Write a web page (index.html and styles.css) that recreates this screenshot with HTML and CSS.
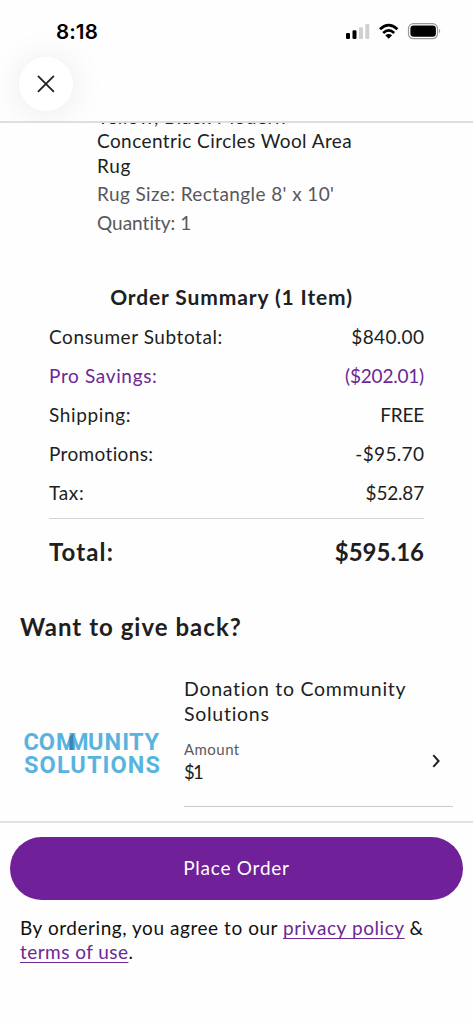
FILE: index.html
```html
<!DOCTYPE html>
<html lang="en">
<head>
<meta charset="utf-8">
<meta name="viewport" content="width=device-width, initial-scale=1">
<title>Review order</title>
<link rel="stylesheet" href="styles.css">
</head>
<body>
<div class="screen">
  <header class="header">
    <div class="status">
      <span class="time">8:18</span>
      <svg class="status-icons" width="96" height="20" viewBox="0 0 96 20">
        <rect x="1" y="11" width="4" height="6" rx="1.3"/>
        <rect x="7.5" y="8.3" width="4" height="8.7" rx="1.3"/>
        <rect class="off" x="14" y="5.2" width="4" height="11.8" rx="1.3"/>
        <rect class="off" x="20.3" y="2" width="4" height="15" rx="1.3"/>
        <path class="wave" d="M35 7.2Q43.7-.8 52.4 7.2M38.2 10.9Q43.7 5.8 49.2 10.9"/>
        <path d="M43.7 16.8L40.3 13.2Q43.7 10.7 47.1 13.2Z"/>
        <rect class="shell" x="63.5" y="1.7" width="29" height="15" rx="4.8"/>
        <rect x="65.4" y="3.6" width="25.5" height="11.2" rx="3.3"/>
        <path class="cap" d="M94 7Q96.2 9.2 94 11.4Z"/>
      </svg>
    </div>
    <button class="close" aria-label="Close">
      <svg width="18" height="18" viewBox="0 0 18 18"><path d="M1.4 1.4L16.4 16.4M16.4 1.4L1.4 16.4"/></svg>
    </button>
  </header>
  <main class="content">
    <section class="product">
      <div class="name"><span class="n1">Yellow, Black Modern</span><br><span class="n2">Concentric Circles Wool Area</span><br><span class="n3">Rug</span></div>
      <div class="option"><span class="o1">Rug Size: Rectangle 8' x 10'</span></div>
      <div class="option"><span class="o2">Quantity: 1</span></div>
    </section>
    <section class="summary">
      <h2 class="summary-title">Order Summary (1 Item)</h2>
      <div class="row"><span class="r1">Consumer Subtotal:</span><span class="a1">$840.00</span></div>
      <div class="row pro"><span class="r2">Pro Savings:</span><span class="a2">($202.01)</span></div>
      <div class="row"><span class="r3">Shipping:</span><span class="a3">FREE</span></div>
      <div class="row"><span class="r4">Promotions:</span><span class="a4">-$95.70</span></div>
      <div class="row"><span class="r5">Tax:</span><span class="a5">$52.87</span></div>
      <div class="total"><span class="t1">Total:</span><span class="t2">$595.16</span></div>
    </section>
    <h2 class="give">Want to give back?</h2>
    <section class="donation">
      <svg class="logo" width="138" height="52" viewBox="0 -3 138 52">
        <text x="0.5 15.8 33 45 65 81.6 99.2 106 121.4" y="19">COMMUNITY</text>
        <path class="overlap" d="M46.4 6L50.3 2.3V19H46.4Z"/>
        <text x="1" y="42" textLength="136" lengthAdjust="spacing">SOLUTIONS</text>
      </svg>
      <div class="gift">
        <div class="gift-title"><span class="g1">Donation to Community</span><br><span class="g2">Solutions</span></div>
        <div class="gift-row">
          <div>
            <div class="gift-label">Amount</div>
            <div class="gift-value">$1</div>
          </div>
          <svg class="chevron" width="8" height="14" viewBox="0 0 8 14"><path d="M1.3 1.2L6.6 7L1.3 12.8"/></svg>
        </div>
      </div>
    </section>
  </main>
  <footer class="footer">
    <button class="place"><span>Place Order</span></button>
    <p class="legal"><span class="l1">By ordering, you agree to our</span> <a class="l2">privacy policy</a> <span>&amp;</span><br><a class="l3">terms of use</a>.</p>
  </footer>
</div>
</body>
</html>
```
FILE: styles.css
```css
* { box-sizing: border-box; }
body { margin: 0; background: #fff; color: #211e22; font: 400 19px/24.4px Lato, "Open Sans", sans-serif; font-variant-ligatures: none; }
.screen { height: 1024px; width: 473px; display: flex; flex-direction: column; overflow: hidden; background: #fefefe; white-space: nowrap; }
h2, p { margin: 0; }
button { border: 0; padding: 0; font: inherit; }
.header { height: 123px; flex: none; border-bottom: 2px solid #dededf; padding: 22px 0 0 19px; overflow: hidden; }
.status { display: flex; justify-content: space-between; padding: 0 32px 0 37px; height: 20px; }
.time { font: 600 20.5px/20px Inter, sans-serif; color: #000; letter-spacing: .1px; }
.status-icons rect.off { fill: #d0d0d0; }
.status-icons .wave { fill: none; stroke: #000; stroke-width: 2.7; }
.status-icons .shell { fill: none; stroke: #999; stroke-width: 1.2; }
.status-icons .cap { fill: #999; }
.close { margin-top: 15px; width: 54px; height: 54px; border-radius: 50%; background: #fff; display: grid; place-items: center; box-shadow: 0 2px 36px rgba(0,0,0,.085); }
.close path { stroke: #222; stroke-width: 1.8; stroke-linecap: round; }
.content { height: 698px; flex: none; overflow: hidden; }
.product { padding-left: 97px; margin-top: -18px; }
.name { height: 77px; }
.n1 { letter-spacing: .5px; }
.n2 { letter-spacing: .42px; }
.n3 { letter-spacing: .7px; }
.option { height: 29px; color: #59575c; }
.o1 { letter-spacing: .4px; }
.summary { padding: 0 49px; margin-top: 42px; }
.summary-title { font-size: 21px; line-height: 30px; font-weight: 700; text-align: center; padding-right: 10px; margin-bottom: 6px; letter-spacing: .88px; }
.row { height: 38.9px; line-height: 38.9px; display: flex; justify-content: space-between; }
.r1 { letter-spacing: .55px; }
.r2, .r3, .r5 { letter-spacing: .65px; }
.r4 { letter-spacing: .35px; }
.a1, .a4 { letter-spacing: .35px; margin-right: -.35px; }
.a2, .a3, .a5 { letter-spacing: -.2px; }
.pro { color: #6c2894; }
.total { border-top: 1px solid #d2d2d2; margin-top: 6px; height: 69px; line-height: 66px; font-size: 24px; font-weight: 700; display: flex; justify-content: space-between; }
.t1 { letter-spacing: 1.1px; }
.give { font-size: 24px; line-height: 30px; margin: 25px 0 0 20px; letter-spacing: 1.02px; }
.donation { display: flex; padding: 35px 20px 0 23px; }
.logo { margin: 51px 23px 0 0; flex: none; overflow: visible; }
.logo text { font: 700 23.5px Roboto, sans-serif; fill: #58b4df; }
.logo .overlap { fill: #3c83b8; }
.gift { flex: 1; border-bottom: 1px solid #cbcbcb; height: 130px; }
.gift-title { height: 61px; font-size: 19.5px; letter-spacing: .72px; }
.gift-row { display: flex; justify-content: space-between; align-items: center; padding-right: 13px; }
.gift-label { font-size: 15px; line-height: 23px; color: #5c5a5f; letter-spacing: .45px; }
.gift-value { font-size: 18.5px; line-height: 23px; letter-spacing: -1.7px; }
.chevron path { fill: none; stroke: #222; stroke-width: 2; }
.footer { border-top: 2px solid #e1e1e2; padding: 14px 10px 0; flex: 1; }
.place { display: block; width: 453px; height: 63px; border-radius: 32px; background: #702098; color: #fff; line-height: 61px; padding-bottom: 4px; letter-spacing: .75px; }
.legal { padding: 16px 0 0 10px; color: #111; }
.l1 { letter-spacing: .55px; }
.l2 { letter-spacing: .57px; }
.l3 { letter-spacing: .45px; }
.legal a { color: #6c2894; text-decoration: underline; text-decoration-thickness: 1.3px; text-underline-offset: 3px; }
```
